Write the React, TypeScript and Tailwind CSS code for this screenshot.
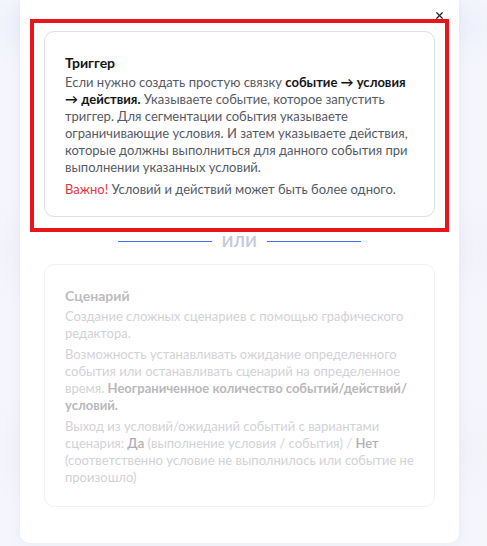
import React from 'react';
import { X } from 'lucide-react';

const Divider: React.FC = () => (
    <div className="flex items-center justify-center gap-[10px] h-[18px]">
        <span className="w-[94px] h-px bg-[#3f6ef0]"></span>
        <span className="text-[15px] leading-[18px] font-bold text-[#c3cadd] tracking-wide">ИЛИ</span>
        <span className="w-[94px] h-px bg-[#3f6ef0]"></span>
    </div>
);

const App: React.FC = () => {
    return (
        <div
            className="relative w-[487px] h-[546px] overflow-hidden bg-[#f5f6fc]"
            style={{ fontFamily: 'Lato, "Noto Sans", sans-serif' }}
        >
            <div className="absolute inset-x-0 top-[12px] h-[30px] bg-[#eceffc] blur-md"></div>
            <div className="absolute inset-x-0 top-[230px] h-[40px] bg-[#f0f1f8] blur-lg"></div>
            <div className="absolute inset-x-0 top-[430px] h-[40px] bg-[#f1f2f8] blur-lg"></div>

            <div className="relative ml-[20px] w-[439px] bg-white rounded-b-[10px] shadow-[0_0_12px_rgba(200,205,225,0.35)] px-[10px] pt-[19px] pb-[36px]">
                <button className="absolute top-[10px] right-[14px] text-[#222]">
                    <X size={11} strokeWidth={2.6} />
                </button>

                <div className="border-4 border-[#e8161c] pt-[8px] pb-[11px] px-[10px]">
                    <div className="border border-[#dcdde9] rounded-[10px] pt-[21px] pb-[18px] px-[20px] text-[13px] leading-[17px] text-[#555a66]">
                        <h3 className="text-[14px] leading-[20px] font-bold text-[#141414] mb-[1px]">Триггер</h3>
                        <p>
                            Если нужно создать простую связку <b className="font-bold text-[#141414]">событие → условия → действия.</b> Указываете событие, которое запустить триггер. Для сегментации события указываете ограничивающие условия. И затем указываете действия, которые должны выполниться для данного события при выполнении указанных условий.
                        </p>
                        <p className="mt-[5px]">
                            <span className="text-[#e53540]">Важно!</span> Условий и действий может быть более одного.
                        </p>
                    </div>
                </div>

                <Divider />

                <div className="mx-[14px] mt-[14px] border border-[#f0f1f5] rounded-[10px] pt-[21px] pb-[20px] px-[20px] text-[13px] leading-[17px] text-[#d2d2d6]">
                    <h3 className="text-[14px] leading-[20px] font-bold text-[#bcbcc0] mb-[2px]">Сценарий</h3>
                    <p>Создание сложных сценариев с помощью графического редактора.</p>
                    <p className="mt-[4px]">
                        Возможность устанавливать ожидание определенного события или останавливать сценарий на определенное время. <b className="font-bold text-[#b8b8bc]">Неограниченное количество событий/действий/условий.</b>
                    </p>
                    <p className="mt-[4px]">
                        Выход из условий/ожиданий событий с вариантами сценария: <b className="font-semibold text-[#b0b0b4]">Да</b> (выполнение условия / события) / <b className="font-semibold text-[#b0b0b4]">Нет</b> (соответственно условие не выполнилось или событие не произошло)
                    </p>
                </div>
            </div>
        </div>
    );
};

export default App;
